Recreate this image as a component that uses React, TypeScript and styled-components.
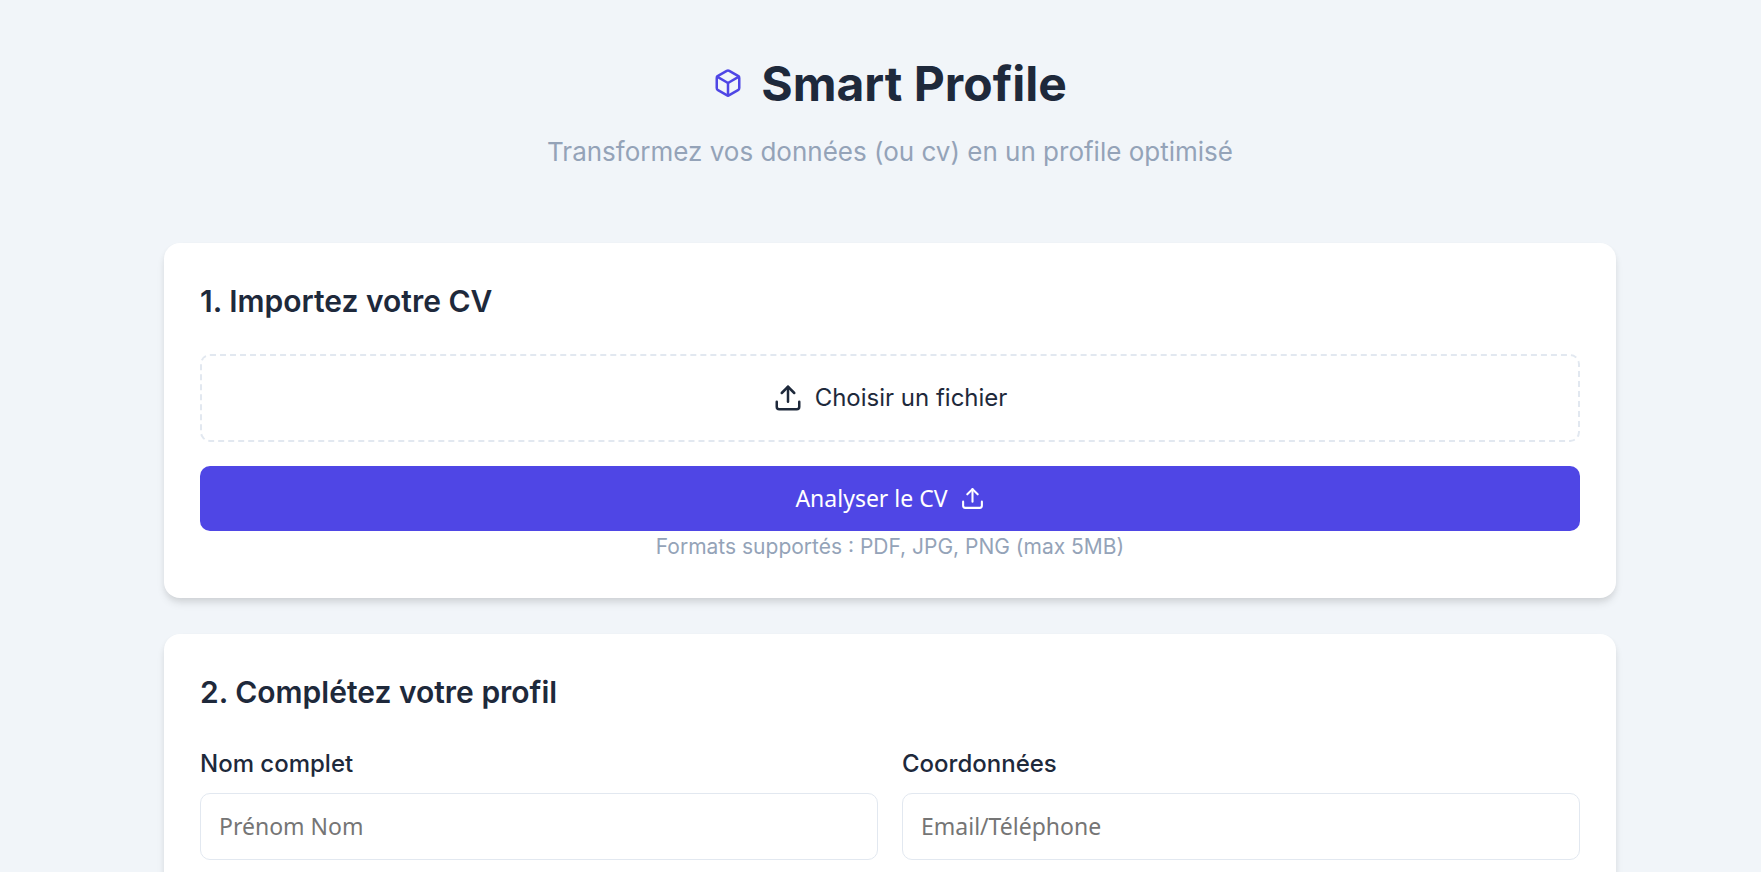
import React from "react";
import styled, { createGlobalStyle } from "styled-components";
import { FiBox, FiUpload } from "react-icons/fi";

const GlobalStyle = createGlobalStyle`
  *, *::before, *::after { box-sizing: border-box; }
  body {
    margin: 0;
    background: #f1f5f9;
    color: #1e293b;
    font-family: Inter, "Liberation Sans", sans-serif;
    font-size: 24px;
    line-height: 36px;
  }
`;

const controlFont = `400 23px/29px "Noto Sans", sans-serif`;

const Page = styled.main`
  min-height: 100vh;
  padding: 48px 24px 48px 43px;
`;

const Container = styled.div`
  max-width: 1452px;
  margin: 0 auto;
`;

const Header = styled.header`
  margin-bottom: 72px;
  text-align: center;
`;

const Title = styled.h1`
  display: flex;
  align-items: center;
  justify-content: center;
  gap: 18px;
  margin: 0 0 12px;
  font-size: 48px;
  line-height: 72px;
  font-weight: 700;

  svg {
    margin-bottom: 2px;
    color: #4f46e5;
  }
`;

const Subtitle = styled.p`
  margin: 0;
  color: #94a3b8;
  font-size: 26px;
  line-height: 39px;
`;

const Card = styled.section`
  margin-bottom: 36px;
  padding: 36px;
  border-radius: 16px;
  background: #fff;
  box-shadow: 0 6px 9px -1px rgba(0, 0, 0, 0.1), 0 3px 6px -1px rgba(0, 0, 0, 0.06);
`;

const CardTitle = styled.h2`
  margin: 0 0 30px;
  font-size: 30px;
  line-height: 45px;
  font-weight: 600;
`;

const FilePicker = styled.label`
  display: flex;
  align-items: center;
  justify-content: center;
  gap: 12px;
  margin-bottom: 24px;
  padding: 24px;
  border: 2px dashed #e2e8f0;
  border-radius: 10px;
  cursor: pointer;
`;

const FileInput = styled.input`
  display: none;
`;

const AnalyseButton = styled.button`
  display: flex;
  align-items: center;
  justify-content: center;
  gap: 12px;
  width: 100%;
  padding: 18px 36px;
  border: 0;
  border-radius: 10px;
  background: #4f46e5;
  color: #fff;
  font: ${controlFont};
  cursor: pointer;
`;

const Hint = styled.p`
  margin: 0;
  color: #94a3b8;
  font-size: 21px;
  line-height: 31px;
  text-align: center;
`;

const FieldGrid = styled.div`
  display: grid;
  grid-template-columns: repeat(2, minmax(0, 1fr));
  gap: 24px;
`;

const Field = styled.div`
  display: flex;
  flex-direction: column;
  gap: 10px;
`;

const FieldLabel = styled.label`
  line-height: 38px;
  font-weight: 500;
`;

const TextInput = styled.input`
  width: 100%;
  padding: 18px;
  border: 1px solid #e2e8f0;
  border-radius: 10px;
  background: #fff;
  color: #1e293b;
  font: ${controlFont};

  &::placeholder { color: #757575; }
`;

export default function App() {
  return (
    <>
      <GlobalStyle />
      <Page>
        <Container>
          <Header>
            <Title>
              <FiBox size={30} aria-hidden />
              Smart Profile
            </Title>
            <Subtitle>Transformez vos données (ou cv) en un profile optimisé</Subtitle>
          </Header>

          <Card>
            <CardTitle>1. Importez votre CV</CardTitle>
            <FilePicker htmlFor="cv-file">
              <FiUpload size={30} aria-hidden />
              Choisir un fichier
            </FilePicker>
            <FileInput id="cv-file" type="file" accept=".pdf,.jpg,.png" />
            <AnalyseButton type="button">
              Analyser le CV
              <FiUpload size={25} aria-hidden />
            </AnalyseButton>
            <Hint>Formats supportés : PDF, JPG, PNG (max 5MB)</Hint>
          </Card>

          <Card>
            <CardTitle>2. Complétez votre profil</CardTitle>
            <FieldGrid>
              <Field>
                <FieldLabel htmlFor="full-name">Nom complet</FieldLabel>
                <TextInput id="full-name" type="text" placeholder="Prénom Nom" />
              </Field>
              <Field>
                <FieldLabel htmlFor="contact">Coordonnées</FieldLabel>
                <TextInput id="contact" type="text" placeholder="Email/Téléphone" />
              </Field>
            </FieldGrid>
          </Card>
        </Container>
      </Page>
    </>
  );
}
